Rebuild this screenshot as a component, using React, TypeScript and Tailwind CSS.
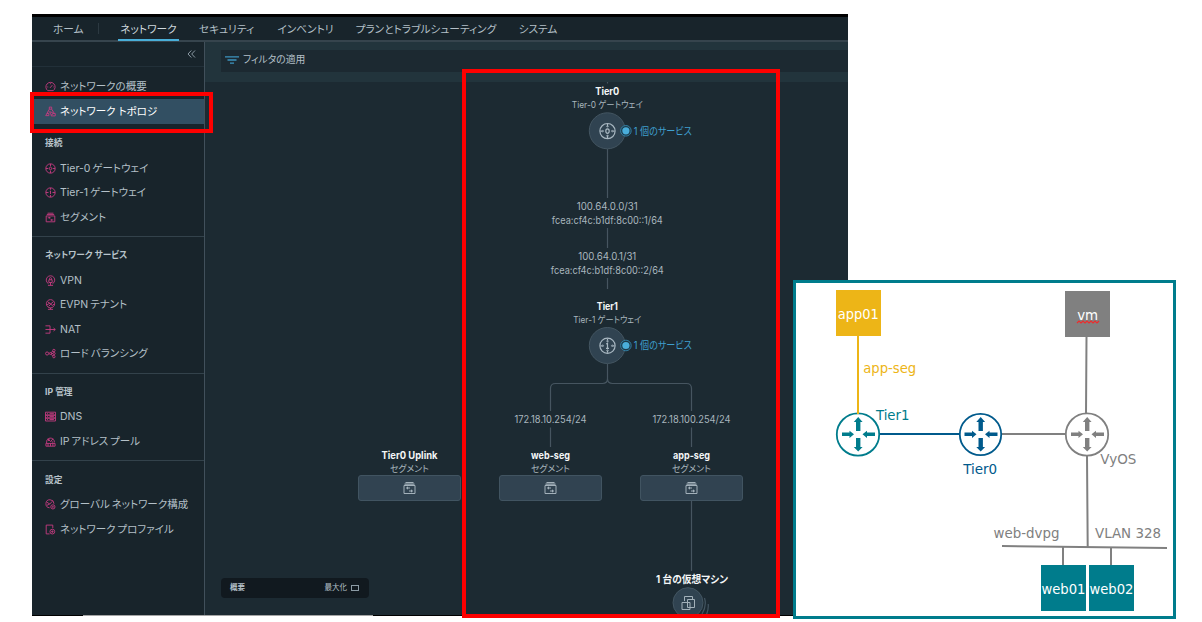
import type { ReactNode } from 'react'

type IconName =
  | 'gauge'
  | 'topology'
  | 'router0'
  | 'router1'
  | 'segment'
  | 'vpn'
  | 'evpn'
  | 'nat'
  | 'lb'
  | 'dns'
  | 'pool'
  | 'global'
  | 'profile'

const tabs = [
  { label: 'ネットワーク', box: 'w-[61px] ml-[19px]', active: true },
  { label: 'セキュリティ', box: 'w-[61px] ml-[17px]', active: false },
  { label: 'インベントリ', box: 'w-[61px] ml-[18px]', active: false },
  { label: 'プランとトラブルシューティング', box: 'w-[146px] ml-[17px]', active: false },
  { label: 'システム', box: 'w-[42px] ml-[18px]', active: false },
]

const sections: { title: string; items: { icon: IconName; label: string }[] }[] = [
  {
    title: '接続',
    items: [
      { icon: 'router0', label: 'Tier-0 ゲートウェイ' },
      { icon: 'router1', label: 'Tier-1 ゲートウェイ' },
      { icon: 'segment', label: 'セグメント' },
    ],
  },
  {
    title: 'ネットワーク サービス',
    items: [
      { icon: 'vpn', label: 'VPN' },
      { icon: 'evpn', label: 'EVPN テナント' },
      { icon: 'nat', label: 'NAT' },
      { icon: 'lb', label: 'ロード バランシング' },
    ],
  },
  {
    title: 'IP 管理',
    items: [
      { icon: 'dns', label: 'DNS' },
      { icon: 'pool', label: 'IP アドレス プール' },
    ],
  },
  {
    title: '設定',
    items: [
      { icon: 'global', label: 'グローバル ネットワーク構成' },
      { icon: 'profile', label: 'ネットワーク プロファイル' },
    ],
  },
]

// Icon strokes, drawn on a 12x12 grid.
const glyphs: Record<IconName, ReactNode> = {
  gauge: <path d="M3 10.5a5 5 0 1 1 6 0zM5.5 7.5 8 4.5M2.5 6.5h1M6 2.5v1M9 6.5h.7" />,
  topology: (
    <>
      <path d="M4.7 1.2h2.6v2.3H4.7zM4.7 3.5.8 10.5h3.4V8.2H2.1M7.3 3.5 10 7.8M4 6.5h2.5" />
      <circle cx="7.2" cy="8.2" r="1.3" />
      <path d="M6.8 9.5v1.3h4.4V8.2H8.5" />
    </>
  ),
  router0: (
    <>
      <circle cx="6" cy="6" r="5.1" />
      <ellipse cx="6" cy="6" rx="1.2" ry="1.5" />
      <path d="M6 1v2.6M6 8.4V11M1 6h2.6M8.4 6H11" />
    </>
  ),
  router1: (
    <>
      <circle cx="6" cy="6" r="5.1" />
      <path d="M5.3 4.7 6 4.3v3.4M6 1v2M6 8.8V11M1 6h2.8M8.2 6H11" />
    </>
  ),
  segment: <path d="M2.8 1.3h6.4M2 2.8h8M1.3 4.3h9.4v6.4H1.3zM3 6.3h3M5 5.5v1.6M6 8.7h3M7 7.9v1.6" />,
  vpn: <path d="M3.8 9.5a4.6 4.6 0 1 1 4.4 0M4.2 5.2h3.6v3H4.2zM4.9 5.2V4a1.1 1.1 0 0 1 2.2 0v1.2M6 8.5v2.7M3.2 11.3h5.6" />,
  evpn: (
    <>
      <circle cx="6" cy="5.2" r="4.5" />
      <path d="m3 3 3 2.6L9 3M2.2 6.5 5 4.5l3 2.5 2-1.5M4 8l2-2M3.2 11.3h5.6M6 9.5v1.7" />
    </>
  ),
  nat: <path d="M.5 2h5v8h-5M.5 6h10.7M9.3 4.3 11.2 6 9.3 7.7" />,
  lb: (
    <>
      <circle cx="2.3" cy="6" r="1.7" />
      <circle cx="5.9" cy="6" r="1.1" />
      <circle cx="9.7" cy="2.7" r="1.3" />
      <circle cx="9.9" cy="6" r="1.2" />
      <circle cx="9.7" cy="9.4" r="1.3" />
      <path d="M6.5 5.2 8.6 3.4M7 6h1.7M6.5 6.8l2.1 1.8" />
    </>
  ),
  dns: <path d="M.5 1.3h11v3.2H.5zM.5 4.5h11v3.2H.5zM.5 7.7h11v3.2H.5zM2.3 2.9h1M5 2.9h4.7M2.3 6.1h1M5 6.1h4.7M2.3 9.3h1M5 9.3h4.7" />,
  pool: <path d="M1.8 7.8a4.3 4.3 0 1 1 8.4-.8M3 3l3 3 2.8-3M3 5.5 5 4M1 8.1h10v3H1zM3.3 8.1v3M6 8.1v3M8.6 8.1v3M7 5.5l2 1.8" />,
  global: (
    <>
      <path d="M5 9.6a4.4 4.4 0 1 1 4.8-4.4M2 3.5l3.2 2L8 2.5M2 7l3-1.5" />
      <circle cx="8.6" cy="8.6" r="2.3" />
      <circle cx="8.6" cy="8.6" r=".6" />
    </>
  ),
  profile: (
    <>
      <path d="M5 10.8H1.3V1.2h7.2v3.3" />
      <circle cx="8" cy="8.3" r="2.6" />
      <path d="M8 7v2.6M6.7 8.3h2.6" />
    </>
  ),
}

function Icon({ name }: { name: IconName }) {
  return (
    <svg viewBox="0 0 12 12" className="mt-px h-[11px] w-[11px] shrink-0" fill="none" stroke="#c43b80" strokeWidth="1">
      {glyphs[name]}
    </svg>
  )
}

function MenuItem({ icon, label, selected = false }: { icon: IconName; label: string; selected?: boolean }) {
  return (
    <li
      className={
        selected
          ? 'flex h-[25.5px] items-center gap-1 bg-[#324f62] pl-[13px] text-white'
          : 'flex h-[24.5px] items-center gap-1 pl-[13px]'
      }
    >
      <Icon name={icon} />
      <span className="pt-[2.5px]">{label}</span>
    </li>
  )
}

type LabelProps = {
  x: number
  y: number
  w: number
  size?: number
  fill?: string
  bold?: boolean
  children: string
}

// Text centred on x, with y as the baseline and w as the drawn width.
function Label({ x, y, w, size = 10.5, fill = '#a9b6be', bold = false, children }: LabelProps) {
  return (
    <text
      x={x - w / 2}
      y={y}
      textLength={w}
      lengthAdjust="spacingAndGlyphs"
      fontSize={size}
      fontWeight={bold ? 700 : 400}
      fill={fill}
    >
      {children}
    </text>
  )
}

function Gateway({ cy, tier, width }: { cy: number; tier: 0 | 1; width: number }) {
  return (
    <g>
      <Label x={607.3} y={cy - 35.5} w={width} size={10} fill="#f4f6f7" bold>
        {`Tier${tier}`}
      </Label>
      <Label x={607.3} y={cy - 22.8} w={tier === 0 ? 71 : 68} size={9}>
        {`Tier-${tier} ゲートウェイ`}
      </Label>
      <circle cx="607.3" cy={cy} r="18" fill="#304351" stroke="#435561" />
      <g transform={`translate(607.5 ${cy + 0.3})`} fill="none" stroke="#a9b8c2" strokeWidth="1.2">
        <circle r="7.6" />
        {tier === 0 ? <ellipse rx="1.7" ry="2.2" /> : <path d="M-1.3-1.8 0-2.5v5M-1.5 2.5h3" />}
        <path d="M0-7v2M0 7V5M-7 0h2M7 0H5" />
        <path d="m-1.2-4.8 1.2 1 1.2-1zM-1.2 4.8l1.2-1 1.2 1zM-4.8-1.2l1 1.2-1 1.2zM4.8-1.2l-1 1.2 1 1.2z" strokeWidth=".4" fill="#a9b8c2" />
      </g>
      <circle cx="625.9" cy={cy} r="5.3" fill="#1b3a4a" stroke="#327da0" />
      <circle cx="625.9" cy={cy} r="3.6" fill="#4aaedb" />
      <Label x={662.8} y={cy + 3.8} w={58} size={10.5} fill="#3f9fce">
        1 個のサービス
      </Label>
    </g>
  )
}

function Segment({ cx, name, width }: { cx: number; name: string; width: number }) {
  return (
    <g>
      <Label x={cx} y={458.5} w={width} size={10} fill="#f4f6f7" bold>
        {name}
      </Label>
      <Label x={cx} y={471.5} w={39} size={9}>
        セグメント
      </Label>
      <rect x={cx - 51} y="475.5" width="102" height="25" rx="2.5" fill="#314351" stroke="#415461" />
      <g transform={`translate(${cx} 488)`} fill="none" stroke="#a3b1ba" strokeWidth="1">
        <path d="M-4-5.5h8M-5-3.8H5" strokeWidth="1.2" />
        <path d="M-5.5-2.5h11v8h-11zM-3.5 0h4M-2-1.3v2.6M-.5 3h4M2 1.7v2.6" />
      </g>
    </g>
  )
}

function TopologyCanvas() {
  return (
    <svg
      viewBox="205 82 643 533"
      className="block h-[533px] w-[643px] font-['Inter','Noto_Sans_CJK_JP',sans-serif] [font-feature-settings:'palt']"
    >
      <g fill="none" stroke="#465560" strokeWidth="1.2">
        <path d="M607.5 82v1.5M607.5 149v49M607.5 228v20M607.5 278v11" />
        <path d="M607.5 364v14.5q0 5-5 5h-47q-5 0-5 5V411M607.5 378.5q0 5 5 5h74q5 0 5 5V411" />
        <path d="M550.5 427.5V447M691.5 427.5V447M691.5 501v70" />
      </g>
      <Gateway cy={130.8} tier={0} width={24} />
      <Label x={607.3} y={209.7} w={61}>100.64.0.0/31</Label>
      <Label x={607.3} y={223.5} w={111}>fcea:cf4c:b1df:8c00::1/64</Label>
      <Label x={607.3} y={259.7} w={58}>100.64.0.1/31</Label>
      <Label x={607.3} y={273.5} w={113}>fcea:cf4c:b1df:8c00::2/64</Label>
      <Gateway cy={345.5} tier={1} width={21} />
      <Label x={550.5} y={422.5} w={72}>172.18.10.254/24</Label>
      <Label x={691.5} y={422.5} w={78}>172.18.100.254/24</Label>
      <Segment cx={409.5} name="Tier0 Uplink" width={56} />
      <Segment cx={550.5} name="web-seg" width={39} />
      <Segment cx={691.5} name="app-seg" width={37} />

      <Label x={692} y={582.5} w={72} size={10.5} fill="#f4f6f7" bold>
        1 台の仮想マシン
      </Label>
      <circle cx="688" cy="602.7" r="15" fill="#304351" stroke="#435561" />
      <path d="M704.5 598q2.5 8-2.5 16M708.2 604q.6 6-2.2 12" fill="none" stroke="#435561" strokeWidth="1.2" />
      <g fill="none" stroke="#a3b1ba" strokeWidth="1">
        <path d="M684.5 601v-4.5h8v3M694.5 599.5h-7v8h7zM682 602.5h8v7h-8z" />
      </g>
    </svg>
  )
}

function RouterNode({ cx, r, color }: { cx: number; r: number; color: string }) {
  return (
    <g transform={`translate(${cx} 434.5)`} fill={color}>
      <circle r={r} fill="#fff" stroke={color} strokeWidth="1.8" />
      <path d="M.2-17.5 4.6-12.5H2.4V-3.5H-2V-12.5H-4.2z" />
      <path d="M.2 17 4.6 12.5H2.4V3.5H-2V12.5H-4.2z" />
      <path d="M-4-.2-8.5-3.8v1.8h-7.5v3.6h7.5v1.8z" />
      <path d="M4.5-.2 9-3.8v1.8h8v3.6H9v1.8z" />
    </g>
  )
}

function NetworkDiagram() {
  return (
    <svg viewBox="796 283 377 333" className="block h-[333px] w-[377px] font-['DejaVu_Sans',sans-serif]">
      <g fill="none" strokeWidth="2">
        <path d="M880 434h80" stroke="#005a8c" />
        <path d="M1001 434h65M1086.5 337l-.5 77M1087 456l.7 91M1063 547v18M1111 547v18" stroke="#808080" />
        <path d="M1002 546l165 2" stroke="#808080" />
      </g>
      <RouterNode cx={858} r={21.2} color="#007c8c" />
      <RouterNode cx={980.5} r={20.7} color="#005a8c" />
      <RouterNode cx={1087} r={21.2} color="#808080" />
      <path d="M858 336v78" stroke="#edb517" strokeWidth="2" />
      <rect x="836" y="290" width="45" height="46" fill="#edb517" />
      <rect x="1065" y="291" width="45" height="46" fill="#808080" />
      <rect x="1041" y="565" width="45" height="46" fill="#007c8c" />
      <rect x="1089" y="565" width="45" height="46" fill="#007c8c" />
      <Label x={858.2} y={319} w={41} size={13.5} fill="#fff">app01</Label>
      <Label x={1087.7} y={320} w={21} size={13.5} fill="#fff">vm</Label>
      <path
        d="m1077 323 2-2 2 2 2-2 2 2 2-2 2 2 2-2 2 2 2-2 2 2 2-2"
        fill="none"
        stroke="#ee2b2b"
        strokeWidth="1.2"
      />
      <Label x={1063.5} y={594} w={44} size={13.5} fill="#fff">web01</Label>
      <Label x={1111.5} y={594} w={44} size={13.5} fill="#fff">web02</Label>
      <Label x={889.7} y={373} w={53} size={13.5} fill="#edb517">app-seg</Label>
      <Label x={892.7} y={420} w={33.5} size={13.5} fill="#007c8c">Tier1</Label>
      <Label x={980.2} y={474} w={34} size={13.5} fill="#005a8c">Tier0</Label>
      <Label x={1118.3} y={464} w={36} size={13.5} fill="#808080">VyOS</Label>
      <Label x={1026.5} y={538} w={66} size={13.5} fill="#808080">web-dvpg</Label>
      <Label x={1128} y={538} w={66} size={13.5} fill="#808080">VLAN 328</Label>
    </svg>
  )
}

export default function App() {
  return (
    <div className="relative h-[622px] w-[1202px] overflow-hidden bg-white pt-[14px] pl-8 font-['Inter','Noto_Sans_CJK_JP',sans-serif] [font-feature-settings:'palt']">
      <div className="flex h-[602px] w-[816px] flex-col border-t-[3px] border-black bg-[#1c2a32] text-[10.5px] leading-none text-[#b4c0c8]">
        <nav className="flex h-[25px] shrink-0 border-b-2 border-[#36444d] bg-[#18242b] pl-[21px] text-[10.7px] whitespace-nowrap">
          <span className="flex w-[31px] items-center pt-[3px]">ホーム</span>
          <span className="my-[6px] ml-[14px] w-px bg-[#2c3941]" />
          {tabs.map((tab) => (
            <span
              key={tab.label}
              className={`${tab.box} ${
                tab.active
                  ? '-mb-px flex items-center justify-center border-b-2 border-[#49afd9] pt-1 text-[#cfd9df]'
                  : 'flex items-center justify-center pt-[3px]'
              }`}
            >
              {tab.label}
            </span>
          ))}
        </nav>

        <div className="flex min-h-0 flex-1">
          <aside className="w-[173px] shrink-0 border-r border-[#41505b] bg-[#18242b] whitespace-nowrap">
            <div className="flex h-[25px] justify-end border-b border-[#223039] pt-[8px] pr-2">
              <svg viewBox="0 0 9 8" className="h-2 w-[9px]" fill="none" stroke="#8b9aa4" strokeWidth="1">
                <path d="M4.3.5 1 4l3.3 3.5M8 .5 4.7 4 8 7.5" />
              </svg>
            </div>
            <ul className="pt-[7px]">
              <MenuItem icon="gauge" label="ネットワークの概要" />
              <MenuItem icon="topology" label="ネットワーク トポロジ" selected />
            </ul>
            {sections.map((section, i) => (
              <section
                key={section.title}
                className={
                  i === 0
                    ? 'border-t border-transparent pt-[9px] pb-[7px]'
                    : 'border-t border-[#33424b] pt-[9px] pb-[7.2px]'
                }
              >
                <h3 className="mb-[3.5px] flex h-[18px] items-center pt-px pl-[13px] text-[8.7px] font-bold text-[#b9c4cb]">
                  {section.title}
                </h3>
                <ul className="[word-spacing:-1px]">
                  {section.items.map((item) => (
                    <MenuItem key={item.label} icon={item.icon} label={item.label} />
                  ))}
                </ul>
              </section>
            ))}
          </aside>

          <main className="relative flex flex-1 flex-col">
            <div className="h-[40px] shrink-0 bg-[#22343c] pt-2 pl-4">
              <div className="flex h-[22px] items-center gap-1 bg-[#1c2931] pb-[2px] pl-1 text-[9.8px]">
                <svg viewBox="0 0 14 8" className="h-2 w-[14px]" fill="none" stroke="#3d94bf" strokeWidth="1.3">
                  <path d="M0 .8h14M2.5 4h9M5 7.2h4" />
                </svg>
                フィルタの適用
              </div>
            </div>
            <TopologyCanvas />
            {/* Minimap bar floating over the canvas */}
            <div className="absolute bottom-[17px] left-4 flex h-5 w-[148px] items-center rounded-sm bg-[#11191f] pr-[10px] pl-[9px] text-[7.5px]">
              <span className="font-bold">概要</span>
              <span className="ml-auto">最大化</span>
              <span className="ml-1 h-[6px] w-2 border border-[#8b9aa4]" />
            </div>
          </main>
        </div>

        <div className="flex h-px shrink-0 bg-black pl-[51px]">
          <span className="w-[290px] bg-[#a5a5a5]" />
        </div>
      </div>

      {/* Callouts */}
      <div className="absolute top-[92px] left-[30px] h-[41px] w-[183px] border-4 border-[#fe0000]" />
      <div className="absolute top-[69px] left-[462px] h-[549px] w-[318px] border-4 border-[#fe0000]" />

      <div className="absolute top-[280px] left-[793px] h-[339px] w-[383px] border-[3px] border-[#007c8c] bg-white">
        <NetworkDiagram />
      </div>
    </div>
  )
}
